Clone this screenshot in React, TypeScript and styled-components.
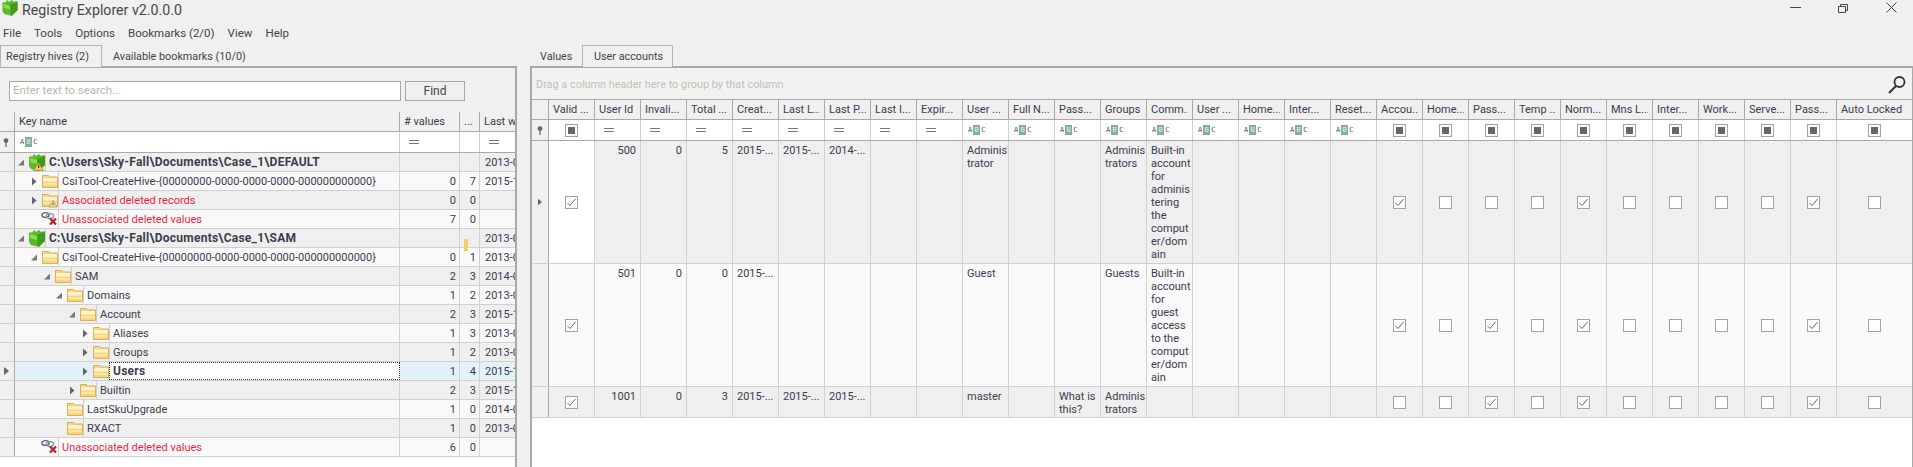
import React from "react";
import styled, { createGlobalStyle } from "styled-components";

const Global = createGlobalStyle`
  html, body { margin: 0; padding: 0; width: 1913px; height: 467px; overflow: hidden; background: #f0f0f0; }
  * { box-sizing: border-box; }
  #root { width: 1913px; height: 467px; font-family: Roboto, "Liberation Sans", sans-serif; font-size: 11px; color: #3c3c4e; }
`;

const Window = styled.div`display: flex; flex-direction: column; width: 1913px; height: 467px; overflow: hidden; background: #f0f0f0;`;
const TitleBar = styled.div`display: flex; align-items: flex-start; height: 20px; padding-left: 2px; gap: 4px; flex: none;`;
const TitleText = styled.span`font-size: 14.2px; color: #484848; flex: 1; line-height: 18px; padding-top: 1px;`;
const WinButtons = styled.div`display: flex; align-self: flex-start; padding: 2px 16px 0 0; gap: 37px;`;
const MenuBar = styled.div`display: flex; height: 25px; align-items: center; gap: 13px; padding-left: 3px; flex: none; font-size: 11.5px; color: #444;`;
const Panes = styled.div`display: flex; flex: 1; min-height: 0;`;
const LeftPane = styled.div`display: flex; flex-direction: column; width: 517px; flex: none;`;
const RightPane = styled.div`display: flex; flex-direction: column; flex: 1; min-width: 0; margin-left: 13px;`;
const TabStrip = styled.div`display: flex; height: 22px; flex: none; margin-bottom: -1px; position: relative;`;
const Tab = styled.div<{ $active?: boolean; $w: number; $pad?: number }>`
  width: ${(p) => p.$w}px; display: flex; align-items: center; padding-left: ${(p) => p.$pad ?? 0}px; height: 22px;
  font-size: 10.8px; color: #444; white-space: nowrap;
  ${(p) => p.$active && `border: 1px solid #b4b4b4; border-bottom: none; background: #f0f0f0; z-index: 1;`}
`;
const LeftPanel = styled.div`flex: 1; display: flex; flex-direction: column; border-top: 2px solid #a9a9a9; border-right: 2px solid #a9a9a9; background: #fff; min-height: 0;`;
const SearchBar = styled.div`height: 44px; flex: none; background: #f0f0f0; display: flex; align-items: center; padding: 1px 0 0 9px; gap: 4px;`;
const SearchInput = styled.div`width: 392px; height: 20px; background: #fff; border: 1px solid #a9a9a9; color: #b7b7a8; padding-left: 3px; line-height: 17px; font-size: 11.5px;`;
const FindButton = styled.div`width: 60px; height: 20px; background: #efefef; border: 1px solid #a9a9a9; display: flex; align-items: center; justify-content: center; font-size: 12px; color: #444;`;
const Row = styled.div<{ $h: number; $bg?: string; $line?: string }>`
  display: flex; height: ${(p) => p.$h}px; flex: none; background: ${(p) => p.$bg ?? "#fff"}; position: relative;
  border-bottom: 1px solid ${(p) => p.$line ?? "#d0d0d0"};
`;
const Cell = styled.div<{ $w: number; $line?: string; $bg?: string; $align?: string; $pad?: number; $valign?: string }>`
  width: ${(p) => p.$w}px; flex: none; border-right: 1px solid ${(p) => p.$line ?? "#d0d0d0"};
  background: ${(p) => p.$bg ?? "transparent"}; display: flex;
  justify-content: ${(p) => p.$align ?? "flex-start"}; align-items: ${(p) => p.$valign ?? "center"};
  padding: 0 ${(p) => p.$pad ?? 4}px; overflow: hidden; white-space: nowrap; line-height: 13px;
`;
const LastCell = styled(Cell)`border-right: none; flex: 1;`;
const Spacer = styled.div`flex: 1; min-height: 0;`;
const TreeBox = styled.div`flex: 1; position: relative; min-width: 0; display: flex; flex-direction: column;`;
const Indent = styled.div<{ $w: number }>`width: ${(p) => p.$w}px; flex: none; height: 100%; position: relative;`;
const Expander = styled.svg<{ $l: number }>`position: absolute; left: ${(p) => p.$l}px; top: 5px;`;
const IconBox = styled.svg<{ $top: number }>`position: absolute; right: 0; top: ${(p) => p.$top}px;`;
const TreeCell = styled.div<{ $focus?: boolean; $w: number }>`
  width: ${(p) => p.$w}px; flex: none; display: flex; align-items: center; padding-left: 3px; height: 100%;
  border-left: 1px solid #d0d0d0; border-right: 1px solid #d0d0d0; white-space: nowrap; overflow: hidden; line-height: 13px;
  ${(p) => p.$focus && `background: #fff; border: 1px dotted #333;`}
`;
const Label = styled.span<{ $red?: boolean; $bold?: boolean }>`
  color: ${(p) => (p.$red ? "#ef1f3f" : "#3c3c4e")}; font-weight: ${(p) => (p.$bold ? 700 : 400)};
  ${(p) => p.$bold && `letter-spacing: 0.25px; font-size: 12px;`}
`;
const EqIcon = styled.div`width: 10px; height: 4px; border-top: 1px solid #777; border-bottom: 1px solid #777; margin-left: 5px;`;
const AbcWrap = styled.div`display: flex; align-items: center; height: 10px; margin-left: 1px; font-family: "DejaVu Sans Mono", monospace; font-size: 7px; color: #555; line-height: 10px;`;
const AbcMid = styled.span`background: #7fb09c; color: #e4f0ea; width: 7px; text-align: center; margin: 0 1px;`;
const Check = styled.div`
  width: 13px; height: 13px; border: 1px solid #a3a3a3; background: #fff; display: flex; align-items: center; justify-content: center; flex: none;
`;
const Ind = styled.div`width: 7px; height: 7px; background: #666;`;
const GridPanel = styled.div`flex: 1; display: flex; flex-direction: column; border-top: 2px solid #a9a9a9; border-left: 2px solid #a9a9a9; border-right: 1px solid #a9a9a9; background: #fff; min-height: 0;`;
const GroupPanel = styled.div`height: 32px; flex: none; display: flex; align-items: center; justify-content: space-between; padding: 2px 6px 0 4px;
  background: #f2f2f2; color: #c2c2b4; font-size: 10.9px; border-bottom: 1px solid #a9a9a9;`;
const HText = styled.span`overflow: hidden; white-space: nowrap;`;
const CellText = styled.div<{ $right?: boolean }>`padding-top: 3px; white-space: pre; line-height: 13px; width: 100%; text-align: ${(p) => (p.$right ? "right" : "left")};`;
const Mark = styled.div`position: absolute; left: 464px; top: -9px; width: 4px; height: 12px; background: #f4cd6a;`;

const Arrow = ({ open, l }: { open?: boolean; l: number }) => (
  <Expander $l={l} width="8" height="9" viewBox="0 0 8 9">
    {open ? <path d="M7 1.5V7.5H1z" fill="#777" /> : <path d="M2 .5l4.5 4L2 8.5z" fill="#666" />}
  </Expander>
);
const Folder = ({ warn }: { warn?: boolean }) => (
  <IconBox $top={2} width="16" height="15" viewBox="0 0 16 15">
    <path d="M.5 1.5h6l1.2 1.5h7.8v10.5H.5z" fill="#f7d680" stroke="#dfae52" strokeWidth="1" />
    <rect x="1" y="4" width="14" height="3.5" fill="#fdf3cf" />
    <rect x="1" y="9" width="14" height="2" fill="#fbe6a8" />
    {warn && <path d="M11 7.5l4 6.5H7z" fill="#f8e7a0" stroke="#8a7a50" strokeWidth=".6" />}
    {warn && <rect x="10.6" y="9.8" width="1" height="2.6" fill="#555" />}
  </IconBox>
);
const Cube = ({ warn }: { warn?: boolean }) => (
  <>
    <path d="M0 3l2-1 1 1 2-3 2 2 3-2 2 2 3-1 1 1v9l-6 6-8-2-2-3z" fill="#5db82a" />
    <path d="M8 5l8-3v9l-7 6z" fill="#3f9c1a" />
    <path d="M1 4l7 2v4l-7-2z" fill="#8ed84e" />
    {warn && <path d="M9.5 8.5l5 8H4.5z" fill="#f5d040" stroke="#654" strokeWidth=".5" />}
    {warn && <rect x="9" y="11" width="1.2" height="3" fill="#333" />}
  </>
);
const Hive = ({ warn }: { warn?: boolean }) => (
  <IconBox $top={1} width="16" height="17" viewBox="0 0 16 17"><Cube warn={warn} /></IconBox>
);
const Chain = () => (
  <IconBox $top={1} width="17" height="15" viewBox="0 0 17 15">
    <ellipse cx="4.5" cy="4" rx="3.6" ry="2.4" fill="none" stroke="#55657c" strokeWidth="1.4" />
    <ellipse cx="9" cy="5" rx="3.6" ry="2.4" fill="none" stroke="#8a96a8" strokeWidth="1.4" />
    <path d="M9 7.5l6 6M15 7.5l-6 6" stroke="#b02a2a" strokeWidth="2.4" />
  </IconBox>
);
const Pin = () => (
  <svg width="6" height="9" viewBox="0 0 6 9"><circle cx="3" cy="2.6" r="2.4" fill="#666" /><rect x="2.4" y="4" width="1.2" height="5" fill="#666" /></svg>
);
const RowMark = () => (
  <svg width="5" height="8" viewBox="0 0 5 8"><path d="M0 0l5 4-5 4z" fill="#666" /></svg>
);
const Abc = () => (
  <AbcWrap><span>A</span><AbcMid>B</AbcMid><span>C</span></AbcWrap>
);

type Tree = { indent: number; arrow?: "open" | "closed"; icon: "hive" | "hivew" | "folder" | "folderw" | "chain"; text: string; red?: boolean; bold?: boolean; v?: string; n?: string; d?: string; sel?: boolean };
const D13 = "2013-08-22 14:46:37", D14 = "2014-03-18 09:12:11", D15 = "2015-11-30 10:03:22";
const tree: Tree[] = [
  { indent: 30, arrow: "open", icon: "hivew", text: "C:\\Users\\Sky-Fall\\Documents\\Case_1\\DEFAULT", bold: true, d: D13 },
  { indent: 43, arrow: "closed", icon: "folder", text: "CsiTool-CreateHive-{00000000-0000-0000-0000-000000000000}", v: "0", n: "7", d: D15 },
  { indent: 43, arrow: "closed", icon: "folderw", text: "Associated deleted records", red: true, v: "0", n: "0" },
  { indent: 43, icon: "chain", text: "Unassociated deleted values", red: true, v: "7", n: "0" },
  { indent: 30, arrow: "open", icon: "hive", text: "C:\\Users\\Sky-Fall\\Documents\\Case_1\\SAM", bold: true, d: D13 },
  { indent: 43, arrow: "open", icon: "folder", text: "CsiTool-CreateHive-{00000000-0000-0000-0000-000000000000}", v: "0", n: "1", d: D13 },
  { indent: 56, arrow: "open", icon: "folder", text: "SAM", v: "2", n: "3", d: D14 },
  { indent: 68, arrow: "open", icon: "folder", text: "Domains", v: "1", n: "2", d: D13 },
  { indent: 81, arrow: "open", icon: "folder", text: "Account", v: "2", n: "3", d: D15 },
  { indent: 94, arrow: "closed", icon: "folder", text: "Aliases", v: "1", n: "3", d: D13 },
  { indent: 94, arrow: "closed", icon: "folder", text: "Groups", v: "1", n: "2", d: D13 },
  { indent: 94, arrow: "closed", icon: "folder", text: "Users", bold: true, v: "1", n: "4", d: D15, sel: true },
  { indent: 81, arrow: "closed", icon: "folder", text: "Builtin", v: "2", n: "3", d: D15 },
  { indent: 68, icon: "folder", text: "LastSkuUpgrade", v: "1", n: "0", d: D14 },
  { indent: 68, icon: "folder", text: "RXACT", v: "1", n: "0", d: D13 },
  { indent: 43, icon: "chain", text: "Unassociated deleted values", red: true, v: "6", n: "0" },
];

const TreeIcon = ({ k }: { k: Tree["icon"] }) =>
  k === "hive" ? <Hive /> : k === "hivew" ? <Hive warn /> : k === "folder" ? <Folder /> : k === "folderw" ? <Folder warn /> : <Chain />;

const rowBg = (i: number, sel?: boolean) => (sel ? "#e3f1f9" : i % 2 === 0 ? "#efefef" : "#f9f9f9");

const TreeGrid = () => (
  <TreeBox>
    <Row $h={20} $bg="#f0f0f0" $line="#a9a9a9">
      <Cell $w={15} $line="#a9a9a9" />
      <Cell $w={385} $line="#a9a9a9">Key name</Cell>
      <Cell $w={60} $line="#a9a9a9">#&nbsp;values</Cell>
      <Cell $w={20} $line="#a9a9a9" $pad={4}>...</Cell>
      <LastCell $w={35}>Last w</LastCell>
    </Row>
    <Row $h={21} $line="#a9a9a9">
      <Cell $w={15} $line="#a9a9a9" $bg="#f0f0f0" $pad={3}><Pin /></Cell>
      <Cell $w={385}><Abc /></Cell>
      <Cell $w={60}><EqIcon /></Cell>
      <Cell $w={20} />
      <LastCell $w={35}><EqIcon /></LastCell>
    </Row>
    {tree.map((r, i) => (
      <Row key={i} $h={19} $bg={rowBg(i, r.sel)}>
        <Cell $w={15} $line="#a9a9a9" $bg="#f0f0f0" $pad={4}>{r.sel && <RowMark />}</Cell>
        <Indent $w={r.indent}>
          {r.arrow && <Arrow open={r.arrow === "open"} l={r.indent - 28} />}
          <TreeIcon k={r.icon} />
        </Indent>
        <TreeCell $w={385 - r.indent} $focus={r.sel}>
          <Label $red={r.red} $bold={r.bold}>{r.text}</Label>
        </TreeCell>
        <Cell $w={60} $align="flex-end" $pad={3}>{r.v}</Cell>
        <Cell $w={20} $align="flex-end" $pad={3}>{r.n}</Cell>
        <LastCell $w={35} $pad={5}>{r.d}</LastCell>
        {i === 5 && <Mark />}
      </Row>
    ))}
    <Spacer />
  </TreeBox>
);

const headers = ["Valid ...", "User Id", "Invali...", "Total ...", "Creat...", "Last L...", "Last P...", "Last I...", "Expir...", "User ...", "Full N...", "Pass...", "Groups", "Comm...", "User ...", "Home...", "Inter...", "Reset...", "Accou...", "Home...", "Pass...", "Temp ...", "Norm...", "Mns L...", "Inter...", "Work...", "Serve...", "Pass...", "Auto Locked"];
const kinds = "ceeeeeeeeaaaaaaaaaccccccccccc".split("");
const COLW = 46;
const rows = [
  { h: 123, bg: "#efefef", cells: ["c1", "500", "0", "5", "2015-...", "2015-...", "2014-...", "", "", "Adminis\ntrator", "", "", "Adminis\ntrators", "Built-in\naccount\nfor\nadminis\ntering\nthe\ncomput\ner/dom\nain", "", "", "", "", "c1", "c0", "c0", "c0", "c1", "c0", "c0", "c0", "c0", "c1", "c0"], mark: true },
  { h: 123, bg: "#f9f9f9", cells: ["c1", "501", "0", "0", "2015-...", "", "", "", "", "Guest", "", "", "Guests", "Built-in\naccount\nfor\nguest\naccess\nto the\ncomput\ner/dom\nain", "", "", "", "", "c1", "c0", "c1", "c0", "c1", "c0", "c0", "c0", "c0", "c1", "c0"] },
  { h: 31, bg: "#efefef", cells: ["c1", "1001", "0", "3", "2015-...", "2015-...", "2015-...", "", "", "master", "", "What is\nthis?", "Adminis\ntrators", "", "", "", "", "", "c0", "c0", "c1", "c0", "c1", "c0", "c0", "c0", "c0", "c1", "c0"] },
];

const Tick = () => (
  <svg width="11" height="11" viewBox="0 0 11 11"><path d="M1.5 6l2.5 2.5L9.5 2" fill="none" stroke="#666" strokeWidth="1" /></svg>
);

const right = new Set([1, 2, 3]);

const DataGrid = () => (
  <TreeBox>
    <Row $h={20} $bg="#f0f0f0" $line="#a9a9a9">
      <Cell $w={17} $line="#a9a9a9" />
      {headers.map((h, i) =>
        i === 28 ? <LastCell key={i} $w={75}><HText>{h}</HText></LastCell> : <Cell key={i} $w={COLW} $line="#a9a9a9"><HText>{h}</HText></Cell>
      )}
    </Row>
    <Row $h={21} $line="#a9a9a9">
      <Cell $w={17} $line="#a9a9a9" $bg="#f0f0f0" $pad={5}><Pin /></Cell>
      {kinds.map((k, i) => {
        const inner = k === "c" ? <Check><Ind /></Check> : k === "e" ? <EqIcon /> : <Abc />;
        const align = k === "c" ? "center" : "flex-start";
        return i === 28 ? <LastCell key={i} $w={75} $align={align}>{inner}</LastCell> : <Cell key={i} $w={COLW} $align={align}>{inner}</Cell>;
      })}
    </Row>
    {rows.map((r, ri) => (
      <Row key={ri} $h={r.h} $bg={r.bg}>
        <Cell $w={17} $line="#a9a9a9" $bg="#f0f0f0" $pad={6}>{r.mark && <RowMark />}</Cell>
        {r.cells.map((c, i) => {
          const isCheck = c === "c0" || c === "c1";
          const inner = isCheck ? (
            <Check>{c === "c1" && <Tick />}</Check>
          ) : (
            <CellText $right={right.has(i)}>{c}</CellText>
          );
          const focus = ri === 0 && i === 0 ? "#fff" : undefined;
          const props = { $align: isCheck ? "center" : "flex-start", $valign: isCheck ? "center" : "flex-start", $bg: focus };
          return i === 28 ? <LastCell key={i} $w={75} {...props}>{inner}</LastCell> : <Cell key={i} $w={COLW} {...props}>{inner}</Cell>;
        })}
      </Row>
    ))}
    <Spacer />
  </TreeBox>
);

export default function App() {
  return (
    <Window>
      <Global />
      <TitleBar>
        <svg width="16" height="16" viewBox="0 0 16 17"><Cube /></svg>
        <TitleText>Registry Explorer v2.0.0.0</TitleText>
        <WinButtons>
          <svg width="11" height="11" viewBox="0 0 11 11"><path d="M0 5.5h11" stroke="#444" /></svg>
          <svg width="11" height="11" viewBox="0 0 11 11"><path d="M.5 4.5h7v6h-7zM2.5 4.5v-2h7v6h-2" fill="none" stroke="#444" /></svg>
          <svg width="11" height="11" viewBox="0 0 11 11"><path d="M.5.5l10 10M10.5.5l-10 10" stroke="#444" /></svg>
        </WinButtons>
      </TitleBar>
      <MenuBar>
        <span>File</span><span>Tools</span><span>Options</span><span>Bookmarks (2/0)</span><span>View</span><span>Help</span>
      </MenuBar>
      <Panes>
        <LeftPane>
          <TabStrip>
            <Tab $active $w={102} $pad={5}>Registry hives (2)</Tab>
            <Tab $w={148} $pad={11}>Available bookmarks (10/0)</Tab>
          </TabStrip>
          <LeftPanel>
            <SearchBar>
              <SearchInput>Enter text to search...</SearchInput>
              <FindButton>Find</FindButton>
            </SearchBar>
            <TreeGrid />
          </LeftPanel>
        </LeftPane>
        <RightPane>
          <TabStrip>
            <Tab $w={52} $pad={10}>Values</Tab>
            <Tab $active $w={91} $pad={11}>User accounts</Tab>
          </TabStrip>
          <GridPanel>
            <GroupPanel>
              <span>Drag a column header here to group by that column</span>
              <svg width="18" height="18" viewBox="0 0 18 18">
                <circle cx="11.5" cy="6" r="5" fill="none" stroke="#333" strokeWidth="1.8" />
                <path d="M8 10l-7 7" stroke="#333" strokeWidth="2" />
              </svg>
            </GroupPanel>
            <DataGrid />
          </GridPanel>
        </RightPane>
      </Panes>
    </Window>
  );
}
